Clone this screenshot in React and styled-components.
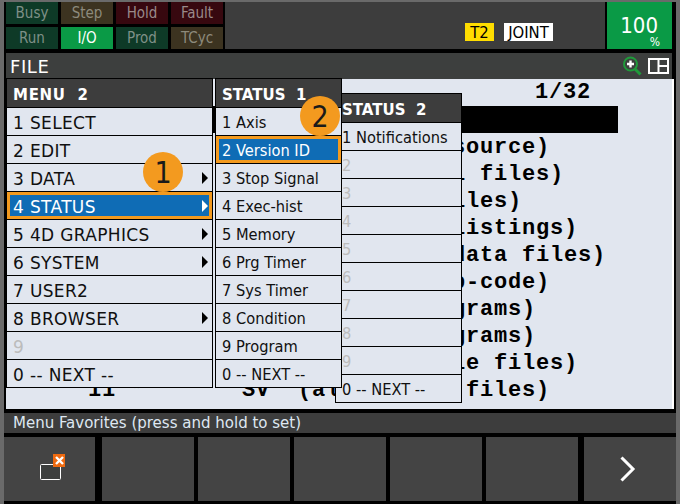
import React from "react";
import styled, { createGlobalStyle } from "styled-components";

const Global = createGlobalStyle`
  html, body { margin: 0; padding: 0; background: #000; }
  * { box-sizing: border-box; }
`;

const COND = `"DejaVu Sans Condensed", "DejaVu Sans", sans-serif`;
const WIDE = `"DejaVu Sans", sans-serif`;

const Screen = styled.div`
  width: 680px;
  height: 504px;
  overflow: hidden;
  background: linear-gradient(#000, #000) 4px 2px / 672px 502px no-repeat, #6a6a6a;
  padding: 2px 4px 0;
  font-family: ${COND};
  display: flex;
  flex-direction: column;
`;

const StatusBar = styled.div`
  height: 47px;
  display: flex;
  margin-bottom: 4px;
`;

const TileGrid = styled.div`
  display: grid;
  grid-template-columns: 52px 52px 52px 52px;
  grid-template-rows: 22px 22px;
  gap: 3px;
  margin-left: 2px;
  margin-right: 2px;
`;

const TONES = {
  green: ["#0e3a27", "#7f9087"],
  brown: ["#3c3320", "#8d8a7c"],
  red: ["#37080f", "#9a8a8a"],
  on: ["#0a9a46", "#ffffff"],
};

const Tile = styled.div`
  display: flex;
  align-items: center;
  justify-content: center;
  font-size: 15px;
  background: ${(p) => TONES[p.$tone][0]};
  color: ${(p) => TONES[p.$tone][1]};
`;

const ModeArea = styled.div`
  width: 380px;
  background: #3d3d3d;
  display: flex;
  padding: 21px 0 0 240px;
  gap: 10px;
  align-items: flex-start;
`;

const ModeTag = styled.span`
  height: 18px;
  width: ${(p) => p.$w}px;
  background: ${(p) => p.$bg};
  color: #000;
  font-size: 16.5px;
  line-height: 19px;
  text-align: center;
`;

const Percent = styled.div`
  width: 65px;
  margin-left: 2px;
  background: #0a9a46;
  color: #fff;
  display: flex;
  flex-direction: column;
  align-items: flex-end;
  padding: 13px 12px 0 0;
`;

const PercentValue = styled.span`
  font-size: 22px;
  line-height: 22px;
  margin-right: 2px;
`;

const PercentSign = styled.span`
  font-size: 12px;
  line-height: 10px;
`;

const TitleBar = styled.div`
  height: 26px;
  margin: 0 4px 0 2px;
  background: #3d3f3e;
  color: #fff;
  display: flex;
  align-items: center;
  justify-content: space-between;
  padding: 0 3px 0 4px;
  font-family: ${WIDE};
  font-size: 18px;
  letter-spacing: 0.6px;
`;

const TitleIcons = styled.div`
  display: flex;
  align-items: center;
  gap: 6px;
`;

const Content = styled.div`
  position: relative;
  height: 330px;
  margin: 0 0 4px 2px;
  background: #e1e6ef;
  border-right: 2px solid #fff;
  width: 668px;
  box-shadow: 2px 0 0 #000;
  font-family: "Liberation Mono", monospace;
  font-weight: 700;
  font-size: 22px;
  color: #000;
`;

const PageCount = styled.div`
  height: 27px;
  line-height: 27px;
  padding-left: 529px;
  letter-spacing: 0.8px;
`;

const ListRow = styled.div`
  height: 27px;
  line-height: 29px;
  margin-left: 82px;
  width: 530px;
  white-space: pre;
  overflow: hidden;
  letter-spacing: 0.8px;
  background: ${(p) => (p.$selected ? "#000" : "transparent")};
  color: ${(p) => (p.$selected ? "#fff" : "#000")};
`;

const Panel = styled.div`
  position: absolute;
  left: ${(p) => p.$left}px;
  top: ${(p) => p.$top}px;
  width: ${(p) => p.$w}px;
  z-index: ${(p) => p.$z};
  border: 1px solid #000;
  background: #e1e6ef;
  font-family: ${WIDE};
  font-weight: 400;
`;

const PanelHead = styled.div`
  height: 28px;
  background: #3d3d3d;
  color: #fff;
  font-weight: 700;
  font-size: 15px;
  line-height: 32px;
  padding-left: ${(p) => p.$pad}px;
  letter-spacing: ${(p) => p.$track}px;
  white-space: pre;
  overflow: hidden;
`;

const Row = styled.div`
  height: 28px;
  border-top: 1px solid #000;
  display: flex;
  align-items: center;
  justify-content: space-between;
  padding: 2px 4px 0 ${(p) => p.$pad}px;
  font-family: ${(p) => (p.$wide ? WIDE : COND)};
  font-size: ${(p) => p.$size}px;
  letter-spacing: ${(p) => (p.$wide ? "0.35px" : "0")};
  white-space: pre;
  color: ${(p) => (p.$active ? "#fff" : p.$muted ? "#bcbcbc" : "#101010")};
  background: ${(p) => (p.$active ? "#0f6cb5" : "transparent")};
  box-shadow: ${(p) => (p.$active ? "inset 0 0 0 3px #f39a1f" : "none")};
`;

const Arrow = styled.span`
  width: 0;
  height: 0;
  margin-top: -2px;
  border-style: solid;
  border-width: 6px 0 6px 6px;
  border-color: transparent transparent transparent ${(p) => (p.$active ? "#fff" : "#000")};
`;

const Callout = styled.div`
  position: absolute;
  left: ${(p) => p.$left}px;
  top: ${(p) => p.$top}px;
  width: 40px;
  height: 40px;
  border-radius: 50%;
  background: #f39a1f;
  color: #1a1a1a;
  z-index: 5;
  display: flex;
  align-items: center;
  justify-content: center;
  font-size: 30px;
  font-family: ${COND};
  font-weight: 400;
`;

const FavBar = styled.div`
  height: 20px;
  background: #3d3d3d;
  color: #dfe8f2;
  font-size: 16.7px;
  line-height: 18px;
  padding-left: 9px;
  margin-bottom: 4px;
`;

const KeyRow = styled.div`
  display: flex;
  height: 64px;
`;

const FKey = styled.div`
  width: ${(p) => p.$w}px;
  margin-right: ${(p) => p.$gap}px;
  background: #444444;
  display: flex;
  align-items: center;
  justify-content: center;
`;

const WindowIcon = () => (
  <svg width="30" height="30" viewBox="0 0 30 30">
    <rect x="5.5" y="10.5" width="20" height="15" rx="1" fill="#3d3f3e" stroke="#fff" />
    <rect x="18" y="0" width="13" height="13" fill="#ef6a10" />
    <path d="M21 3l7 7M28 3l-7 7" stroke="#fff" strokeWidth="2.4" />
  </svg>
);

const ChevronIcon = () => (
  <svg width="18" height="28" viewBox="0 0 18 28" style={{ marginRight: 4 }}>
    <path d="M2.5 2.5L14 14 2.5 25.5" fill="none" stroke="#fff" strokeWidth="3" />
  </svg>
);

const ZoomIcon = () => (
  <svg width="20" height="20" viewBox="0 0 20 20">
    <circle cx="8.5" cy="8" r="6.5" fill="none" stroke="#1f9a3a" strokeWidth="2" />
    <path d="M13 13l5.5 5.5" stroke="#1f9a3a" strokeWidth="3" />
    <path d="M8.5 4.5v7M5 8h7" stroke="#fff" strokeWidth="2.4" />
  </svg>
);

const SplitIcon = () => (
  <svg width="21" height="16" viewBox="0 0 21 16">
    <path d="M1 1h19v14H1zM10.5 1v14M10.5 8H20" fill="none" stroke="#fff" strokeWidth="2" />
  </svg>
);

const tiles = [
  ["Busy", "green"], ["Step", "brown"], ["Hold", "red"], ["Fault", "red"],
  ["Run", "green"], ["I/O", "on"], ["Prod", "green"], ["TCyc", "brown"],
];

const listing = [
  " 1 *       *   (all files)",
  " 2 *       KL  (all KAREL source)",
  " 3 *       CF  (all control files)",
  " 4 *       TX  (all text files)",
  " 5 *       LS  (all KAREL listings)",
  " 6 *       DT  (all KAREL data files)",
  " 7 *       PC  (all KAREL p-code)",
  " 8 *       TP  (all TP programs)",
  " 9 *       MN  (all MN programs)",
  "10 *       VR  (all variable files)",
  "11 *       SV  (all system files)",
];

const menu = [
  { t: "1 SELECT" }, { t: "2 EDIT" }, { t: "3 DATA", more: 1 },
  { t: "4 STATUS", more: 1, active: 1 }, { t: "5 4D GRAPHICS", more: 1 },
  { t: "6 SYSTEM", more: 1 }, { t: "7 USER2" }, { t: "8 BROWSER", more: 1 },
  { t: "9", muted: 1 }, { t: "0 -- NEXT --" },
];

const status1 = [
  { t: "1 Axis" }, { t: "2 Version ID", active: 1 }, { t: "3 Stop Signal" },
  { t: "4 Exec-hist" }, { t: "5 Memory" }, { t: "6 Prg Timer" },
  { t: "7 Sys Timer" }, { t: "8 Condition" }, { t: "9 Program" }, { t: "0 -- NEXT --" },
];

const status2 = [
  { t: "1 Notifications" },
  ...["2", "3", "4", "5", "6", "7", "8", "9"].map((t) => ({ t, muted: 1 })),
  { t: "0 -- NEXT --" },
];

const MenuPanel = ({ title, items, left, top, w, z, size, pad, wide, track }) => (
  <Panel $left={left} $top={top} $w={w} $z={z}>
    <PanelHead $pad={pad} $track={track}>{title}</PanelHead>
    {items.map((it) => (
      <Row key={it.t} $pad={pad} $size={size} $wide={wide} $active={it.active} $muted={it.muted}>
        <span>{it.t}</span>
        {it.more ? <Arrow $active={it.active} /> : null}
      </Row>
    ))}
  </Panel>
);

const keys = [
  [91, 7], [92, 4], [92, 4], [92, 4], [92, 4], [92, 6], [92, 0],
];

export default function App() {
  return (
    <Screen>
      <Global />
      <StatusBar>
        <TileGrid>
          {tiles.map(([t, tone]) => (
            <Tile key={t} $tone={tone}>{t}</Tile>
          ))}
        </TileGrid>
        <ModeArea>
          <ModeTag $w={29} $bg="#ffdd00">T2</ModeTag>
          <ModeTag $w={49} $bg="#ffffff">JOINT</ModeTag>
        </ModeArea>
        <Percent>
          <PercentValue>100</PercentValue>
          <PercentSign>%</PercentSign>
        </Percent>
      </StatusBar>
      <TitleBar>
        <span>FILE</span>
        <TitleIcons>
          <ZoomIcon />
          <SplitIcon />
        </TitleIcons>
      </TitleBar>
      <Content>
        <PageCount>1/32</PageCount>
        {listing.map((l, i) => (
          <ListRow key={l} $selected={i === 0}>{l}</ListRow>
        ))}
        <MenuPanel title="MENU  2" items={menu} left={0} top={-1} w={207} z={2} size={17} pad={6} wide track={0.7} />
        <MenuPanel title="STATUS  1" items={status1} left={209} top={-1} w={127} z={3} size={16.3} pad={6} track={0} />
        <MenuPanel title="STATUS  2" items={status2} left={329} top={14} w={127} z={1} size={16.3} pad={6} track={0} />
        <Callout $left={137} $top={73}>1</Callout>
        <Callout $left={294} $top={17}>2</Callout>
      </Content>
      <FavBar>Menu Favorites (press and hold to set)</FavBar>
      <KeyRow>
        {keys.map(([w, gap], i) => (
          <FKey key={i} $w={w} $gap={gap}>
            {i === 0 ? <WindowIcon /> : i === 6 ? <ChevronIcon /> : null}
          </FKey>
        ))}
      </KeyRow>
    </Screen>
  );
}
